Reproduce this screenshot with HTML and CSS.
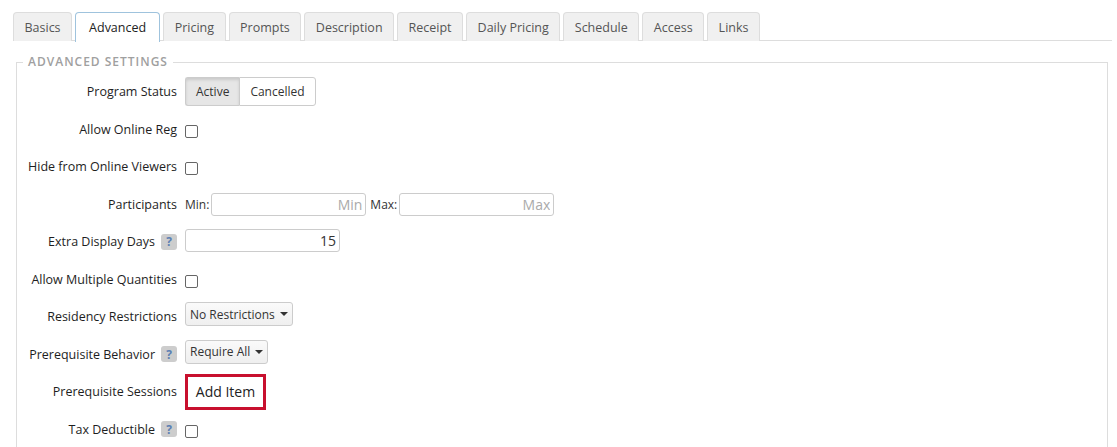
FILE: index.html
```html
<!DOCTYPE html>
<html>
<head>
<meta charset="utf-8">
<link rel="stylesheet" href="styles.css">
</head>
<body>
<div class="page">
  <ul class="tabs">
    <li class="tab">Basics</li>
    <li class="tab active">Advanced</li>
    <li class="tab">Pricing</li>
    <li class="tab">Prompts</li>
    <li class="tab">Description</li>
    <li class="tab">Receipt</li>
    <li class="tab">Daily Pricing</li>
    <li class="tab">Schedule</li>
    <li class="tab">Access</li>
    <li class="tab">Links</li>
  </ul>
  <fieldset class="settings">
    <legend>Advanced Settings</legend>
    <div class="rows">
      <div class="row">
        <label class="lbl">Program Status</label>
        <div class="field">
          <div class="btn-group">
            <span class="btn on">Active</span><span class="btn">Cancelled</span>
          </div>
        </div>
      </div>
      <div class="row">
        <label class="lbl">Allow Online Reg</label>
        <div class="field"><span class="check"></span></div>
      </div>
      <div class="row">
        <label class="lbl">Hide from Online Viewers</label>
        <div class="field"><span class="check"></span></div>
      </div>
      <div class="row">
        <label class="lbl">Participants</label>
        <div class="field">
          <span class="sub">Min:</span>
          <input class="input" type="text" placeholder="Min">
          <span class="sub">Max:</span>
          <input class="input" type="text" placeholder="Max">
        </div>
      </div>
      <div class="row">
        <label class="lbl">Extra Display Days <span class="help">?</span></label>
        <div class="field raise"><input class="input" type="text" value="15"></div>
      </div>
      <div class="row">
        <label class="lbl">Allow Multiple Quantities</label>
        <div class="field"><span class="check"></span></div>
      </div>
      <div class="row">
        <label class="lbl">Residency Restrictions</label>
        <div class="field"><span class="select">No Restrictions <span class="caret"></span></span></div>
      </div>
      <div class="row">
        <label class="lbl">Prerequisite Behavior <span class="help">?</span></label>
        <div class="field"><span class="select">Require All <span class="caret"></span></span></div>
      </div>
      <div class="row">
        <label class="lbl">Prerequisite Sessions</label>
        <div class="field"><span class="add">Add Item</span></div>
      </div>
      <div class="row">
        <label class="lbl">Tax Deductible <span class="help">?</span></label>
        <div class="field"><span class="check"></span></div>
      </div>
    </div>
  </fieldset>
</div>
</body>
</html>
```

FILE: styles.css
```css
* { box-sizing: border-box; }
html, body { margin: 0; padding: 0; background: #fff; }
body {
  font-family: "Open Sans", "Noto Sans", sans-serif;
  font-size: 13px;
  color: #333;
  overflow: hidden;
}
.page { padding: 12px 5px 0 13px; }
.tabs {
  list-style: none;
  margin: 0;
  padding: 0;
  display: flex;
  border-bottom: 1px solid #ddd;
  height: 29px;
}
.tab {
  height: 29px;
  padding: 2px 10.5px 0;
  margin-right: 3px;
  border: 1px solid #ddd;
  border-bottom: none;
  border-radius: 4px 4px 0 0;
  background: #f0f0f0;
  color: #555;
  font-size: 12.5px;
  display: flex;
  align-items: center;
  line-height: 1;
}
.tab.active {
  background: #fff;
  color: #222;
  border-color: #9fc3dd;
  height: 30px;
  padding: 2px 13px 0;
}
.settings {
  margin: 13px 4px 0 3px;
  padding: 0;
  border: 1px solid #ddd;
  min-height: 400px;
}
.settings legend {
  margin-left: 6px;
  padding: 0 5px;
  font-size: 12px;
  line-height: 16px;
  font-weight: 600;
  letter-spacing: 1px;
  text-transform: uppercase;
  color: #a0a0a0;
}
.rows { padding-top: 3px; }
.row {
  display: flex;
  align-items: center;
  height: 37.5px;
}
.lbl {
  width: 160px;
  text-align: right;
  font-size: 12.5px;
  font-weight: 500;
  color: #1e1e1e;
  display: flex;
  justify-content: flex-end;
  align-items: center;
  gap: 4px;
  white-space: nowrap;
}
.field {
  margin-left: 8px;
  display: flex;
  align-items: center;
}
.field.raise { margin-top: -2px; }
.btn-group { display: flex; }
.btn {
  height: 29px;
  display: flex;
  align-items: center;
  padding: 0 10px;
  border: 1px solid #ccc;
  background: #fff;
  color: #333;
  font-size: 12px;
}
.btn.on {
  background: #e6e6e6;
  border-radius: 3px 0 0 3px;
  box-shadow: inset 0 2px 3px rgba(0,0,0,0.12);
  border-right: none;
}
.btn:last-child { border-radius: 0 3px 3px 0; }
.check {
  width: 13px;
  height: 13px;
  border: 1px solid #666;
  border-radius: 2px;
  background: #fff;
  margin-top: 4px;
}
.sub { font-size: 12px; color: #333; margin-right: 2px; }
.sub + .input + .sub { margin-left: 4px; }
.input {
  width: 155px;
  height: 23px;
  border: 1px solid #ccc;
  border-radius: 3px;
  text-align: right;
  font-family: inherit;
  font-size: 14px;
  color: #333;
  padding: 0 3px;
  outline: none;
}
.input::placeholder { color: #aaa; }
.help {
  width: 16px;
  height: 16px;
  border-radius: 3px;
  background: #cdcdcd;
  color: #5b7fb3;
  font-size: 12px;
  font-weight: 700;
  display: inline-flex;
  align-items: center;
  justify-content: center;
  margin-left: 2px;
}
.select {
  height: 24px;
  display: inline-flex;
  align-items: center;
  gap: 3px;
  padding: 0 4px;
  border: 1px solid #ccc;
  border-radius: 3px;
  background: linear-gradient(#fafafa, #efefef);
  font-size: 12px;
  color: #333;
  margin-top: -5px;
}
.caret {
  width: 0; height: 0;
  border-left: 4px solid transparent;
  border-right: 4px solid transparent;
  border-top: 4px solid #333;
  margin-left: 2px;
}
.add {
  width: 81px;
  height: 36px;
  border: 3px solid #c8102e;
  display: flex;
  align-items: center;
  justify-content: center;
  font-size: 14px;
  color: #222;
}
```
